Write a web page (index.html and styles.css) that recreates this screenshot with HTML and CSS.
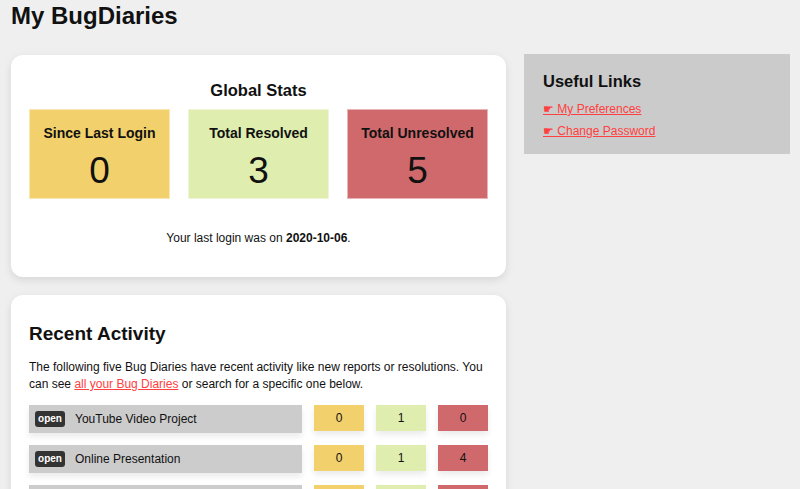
FILE: index.html
```html
<!DOCTYPE html>
<html lang="en">
<head>
<meta charset="utf-8">
<title>My BugDiaries</title>
<link rel="stylesheet" href="styles.css">
</head>
<body>
<h1 class="page-title">My BugDiaries</h1>
<div class="layout">
  <main class="main-col">
    <section class="card stats-card">
      <h2 class="stats-title">Global Stats</h2>
      <div class="stat-grid">
        <div class="stat stat-yellow">
          <div class="stat-label">Since Last Login</div>
          <div class="stat-num">0</div>
        </div>
        <div class="stat stat-green">
          <div class="stat-label">Total Resolved</div>
          <div class="stat-num">3</div>
        </div>
        <div class="stat stat-red">
          <div class="stat-label">Total Unresolved</div>
          <div class="stat-num">5</div>
        </div>
      </div>
      <p class="last-login">Your last login was on <strong>2020-10-06</strong>.</p>
    </section>

    <section class="card activity-card">
      <h2 class="activity-title">Recent Activity</h2>
      <p class="activity-text">The following five Bug Diaries have recent activity like new reports or resolutions. You can see <a href="#">all your Bug Diaries</a> or search for a specific one below.</p>
      <div class="diary-list">
        <div class="diary-row">
          <div class="diary-name"><span class="badge">open</span><span>YouTube Video Project</span></div>
          <div class="count c-yellow">0</div>
          <div class="count c-green">1</div>
          <div class="count c-red">0</div>
        </div>
        <div class="diary-row">
          <div class="diary-name"><span class="badge">open</span><span>Online Presentation</span></div>
          <div class="count c-yellow">0</div>
          <div class="count c-green">1</div>
          <div class="count c-red">4</div>
        </div>
        <div class="diary-row">
          <div class="diary-name"><span class="badge">open</span><span>Website Redesign</span></div>
          <div class="count c-yellow">0</div>
          <div class="count c-green">1</div>
          <div class="count c-red">1</div>
        </div>
        <div class="diary-row">
          <div class="diary-name"><span class="badge">open</span><span>Mobile App</span></div>
          <div class="count c-yellow">0</div>
          <div class="count c-green">0</div>
          <div class="count c-red">0</div>
        </div>
        <div class="diary-row">
          <div class="diary-name"><span class="badge">open</span><span>Podcast Episode</span></div>
          <div class="count c-yellow">0</div>
          <div class="count c-green">0</div>
          <div class="count c-red">0</div>
        </div>
      </div>
    </section>
  </main>

  <aside class="sidebar">
    <h2 class="side-title">Useful Links</h2>
    <a class="side-link" href="#">☛ My Preferences</a>
    <a class="side-link" href="#">☛ Change Password</a>
  </aside>
</div>
</body>
</html>
```

FILE: styles.css
```css
html, body {
  margin: 0;
  padding: 0;
}
body {
  background: #efefef;
  font-family: "Liberation Sans", Arial, sans-serif;
  color: #111;
  padding: 0 10px 0 11px;
}
.page-title {
  font-size: 24px;
  font-weight: bold;
  margin: 2px 0 0 0;
  line-height: 27px;
}
.layout {
  display: grid;
  grid-template-columns: 495px 1fr;
  column-gap: 18px;
  margin-top: 26px;
  align-items: start;
}
.main-col {
  display: flex;
  flex-direction: column;
  gap: 18px;
}
.card {
  background: #fff;
  border-radius: 12px;
  box-shadow: 0 3px 8px rgba(0, 0, 0, 0.1);
  padding: 0 18px;
}
.stats-card {
  padding-top: 26px;
  padding-bottom: 32px;
}
.stats-title {
  font-size: 16.5px;
  text-align: center;
  margin: 0 0 9px 0;
  line-height: 19px;
}
.stat-grid {
  display: grid;
  grid-template-columns: repeat(3, 1fr);
  column-gap: 18px;
}
.stat {
  height: 90px;
  box-sizing: border-box;
  padding-top: 15px;
  text-align: center;
  border: 1px solid rgba(255, 255, 255, 0.5);
}
.stat-yellow { background: #f2d06b; }
.stat-green { background: #dfedaf; }
.stat-red { background: #d0696c; }
.stat-label {
  font-size: 14px;
  font-weight: bold;
  line-height: 16px;
}
.stat-num {
  font-size: 37px;
  line-height: 42px;
  margin-top: 9px;
}
.last-login {
  font-size: 12px;
  text-align: center;
  margin: 32px 0 0 0;
  line-height: 14px;
}
.activity-card {
  padding-top: 28px;
  padding-bottom: 20px;
}
.activity-title {
  font-size: 19px;
  margin: 0;
  line-height: 22px;
}
.activity-text {
  font-size: 12px;
  line-height: 17px;
  margin: 14px 0 12px 0;
}
.activity-text a,
.side-link {
  color: #ff4040;
}
.diary-list {
  display: flex;
  flex-direction: column;
  gap: 12px;
}
.diary-row {
  display: grid;
  grid-template-columns: 1fr 50px 50px 50px;
  column-gap: 12px;
  align-items: start;
}
.diary-name {
  background: #cccccc;
  height: 28px;
  display: flex;
  align-items: center;
  gap: 10px;
  padding-left: 6px;
  font-size: 12px;
  box-shadow: 0 4px 6px rgba(0, 0, 0, 0.08);
}
.badge {
  background: #333;
  color: #fff;
  font-size: 10px;
  font-weight: bold;
  border-radius: 3px;
  width: 30px;
  height: 16px;
  line-height: 16px;
  text-align: center;
}
.count {
  height: 26px;
  line-height: 26px;
  text-align: center;
  font-size: 12px;
  box-shadow: 0 4px 6px rgba(0, 0, 0, 0.08);
}
.c-yellow { background: #f2d06b; }
.c-green { background: #dfedaf; }
.c-red { background: #d0696c; }
.sidebar {
  background: #cbcbcb;
  padding: 18px 19px 16px;
  display: flex;
  flex-direction: column;
  gap: 8px;
  margin-top: -1px;
}
.side-title {
  font-size: 16.5px;
  line-height: 19px;
  margin: 0 0 3px 0;
}
.side-link {
  font-size: 12px;
  line-height: 14px;
}
```
